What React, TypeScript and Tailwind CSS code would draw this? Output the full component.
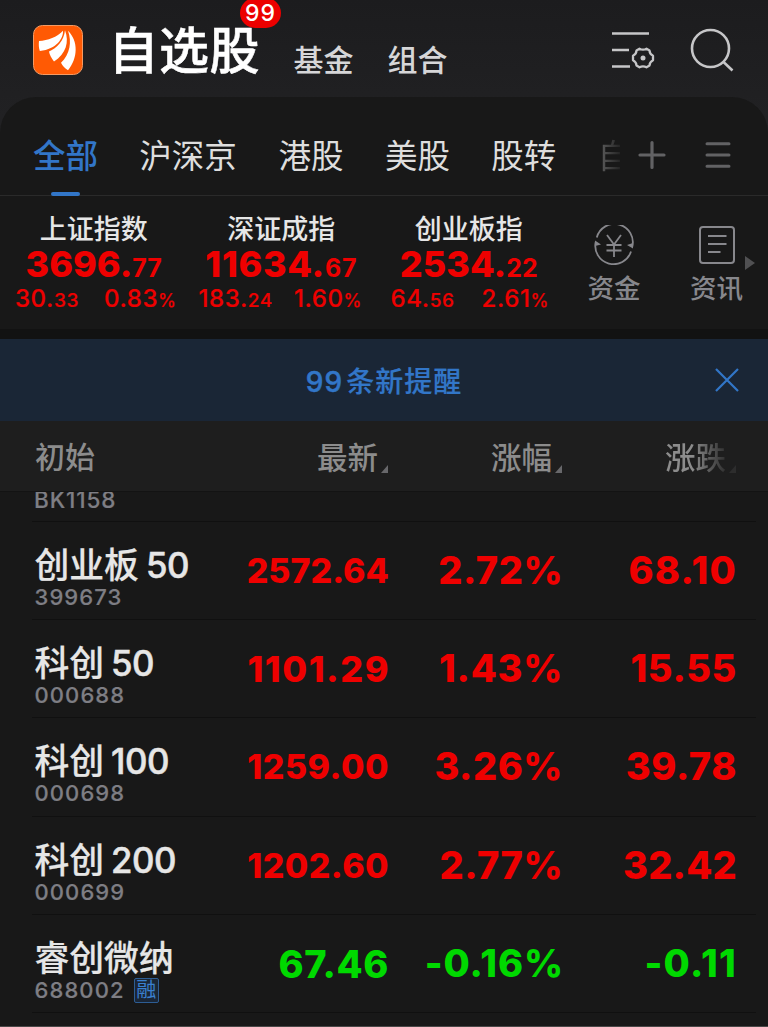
import React from "react";

type IndexQuote = {
  name: string;
  whole: string;
  decimal: string;
  change: [string, string];
  percent: string;
  wholeClass: string;
  detailClass: string;
};

type Stock = {
  name: string;
  suffix?: string;
  code: string;
  price: string;
  percent: string;
  change: string;
  down?: boolean;
  margin?: boolean;
  priceClass: string;
  percentClass: string;
  changeClass: string;
};

const indices: IndexQuote[] = [
  { name: "上证指数", whole: "3696.", decimal: "77", change: ["30.", "33"], percent: "0.83", wholeClass: "tracking-[0px]", detailClass: "gap-[25px] pl-[4px]" },
  { name: "深证成指", whole: "11634.", decimal: "67", change: ["183.", "24"], percent: "1.60", wholeClass: "tracking-[0.7px]", detailClass: "gap-[21px] -ml-[2px]" },
  { name: "创业板指", whole: "2534.", decimal: "22", change: ["64.", "56"], percent: "2.61", wholeClass: "tracking-[0px]", detailClass: "gap-[27px] pl-[2px]" },
];

const stocks: Stock[] = [
  { name: "创业板", suffix: "50", code: "399673", price: "2572.64", percent: "2.72%", change: "68.10", priceClass: "text-[34px] -mr-px", percentClass: "tracking-[0.5px] -mr-px", changeClass: "tracking-[1.200px] -mr-px" },
  { name: "科创", suffix: "50", code: "000688", price: "1101.29", percent: "1.43%", change: "15.55", priceClass: "text-[36px] tracking-[1.500px] -mr-[2px]", percentClass: "tracking-[0.700px] -mr-px", changeClass: "tracking-[0.600px] -mr-px" },
  { name: "科创", suffix: "100", code: "000698", price: "1259.00", percent: "3.26%", change: "39.78", priceClass: "text-[34px] tracking-[0.500px] -mr-px", percentClass: "tracking-[0.500px] -mr-px", changeClass: "tracking-[0.600px] -mr-px" },
  { name: "科创", suffix: "200", code: "000699", price: "1202.60", percent: "2.77%", change: "32.42", priceClass: "text-[34px] tracking-[0.400px] -mr-px", percentClass: "tracking-[0.500px] -mr-px", changeClass: "tracking-[0.200px] -mr-px" },
  { name: "睿创微纳", code: "688002", price: "67.46", percent: "-0.16%", change: "-0.11", down: true, margin: true, priceClass: "text-[38px] tracking-[0.600px] -mr-px", percentClass: "tracking-[0.900px] -mr-[2px]", changeClass: "tracking-[1.200px] -mr-px" },
];

function Logo() {
  return (
    <svg className="h-[50px] w-[50px] shrink-0" viewBox="0 0 50 50">
      <rect x="0.5" y="0.5" width="49" height="49" rx="9" fill="#ff5a04" stroke="#f59a62" />
      <path fill="#fff" d="M6 16 C15 15.5 24 12 30 5.700 C30.500 13 24 24 6.800 26 C5.700 23 5.600 19 6 16Z" />
      <path fill="#fff" d="M32 5.300 C36.500 17 33 29 21 36.500 C18.500 33.500 16.500 29.500 16 26.500 C24 23 31 16 32 5.300Z" />
      <path fill="#fff" d="M35 5.700 C45.500 16 45 33 35 45.300 C32 43.500 29.500 41 28 37.800 C37 29 39 17 35 5.700Z" />
    </svg>
  );
}

function FilterSettingsIcon() {
  return (
    <svg className="h-10 w-11 shrink-0" viewBox="0 0 44 40" fill="none" stroke="#c6c6c8" strokeWidth="2.7">
      <path d="M0 3.500H37M0 20H17M0 36.500H18" />
      <path
        strokeWidth="2.300"
        strokeLinejoin="round"
        d="M27.500 18.700 Q31 20.700 34.500 18.700 L37.500 20.500 Q37.600 24 41 25.800 V30.200 Q37.600 32 37.500 35.500 L34.500 37.300 Q31 35.300 27.500 37.300 L24.500 35.500 Q24.400 32 21 30.200 V25.800 Q24.400 24 24.500 20.500Z"
      />
      <circle cx="31" cy="28" r="2.500" fill="#c6c6c8" stroke="none" />
    </svg>
  );
}

function SearchIcon() {
  return (
    <svg className="h-11 w-11 shrink-0" viewBox="0 0 44 44" fill="none" stroke="#c6c6c8" strokeWidth="2.600">
      <circle cx="20.500" cy="20.500" r="18.500" />
      <path d="M33.500 34L42.500 42.500" />
    </svg>
  );
}

function FundsIcon() {
  return (
    <svg className="h-10 w-10" viewBox="0 0 40 40" fill="none" stroke="#87878c" strokeWidth="1.800">
      <path d="M2.800 12.500A18.300 18.300 0 0 1 38.200 22" />
      <path d="M37 26.500A18.300 18.300 0 0 1 1.700 17" />
      <path d="M39 18V23.500L33 20ZM1 21V15.500L7 19.500Z" fill="#87878c" stroke="none" />
      <path d="M13 10L20 19.500L27 10M20 19.500V32M12.500 20H27.500M12.500 25.500H27.500" />
    </svg>
  );
}

function NewsIcon() {
  return (
    <svg className="h-10 w-10" viewBox="0 0 40 40" fill="none" stroke="#87878c" strokeWidth="2">
      <rect x="3" y="2" width="34" height="36" rx="3" />
      <path d="M11 11H29.500M11 19H29.500M11 27H23.500" />
    </svg>
  );
}

function SortMark() {
  return (
    <svg className="ml-[3px] mt-[21px] h-2 w-2 shrink-0" viewBox="0 0 8 8">
      <path d="M7 0V8H0Z" fill="#68686b" />
    </svg>
  );
}

function Header() {
  return (
    <header className="flex h-[97px] items-start pl-[32.500px]">
      <div className="mt-[25px]">
        <Logo />
      </div>
      <div className="relative ml-[26px] mt-[21px] h-[60px] w-[153px] text-[50px] leading-[60px] font-medium tracking-[0.500px] text-white whitespace-nowrap [-webkit-text-stroke:0.500px_currentColor]">
        自选股
        <span className="absolute left-[131.500px] top-[-23px] flex h-[30px] w-[41px] items-center justify-center rounded-full bg-[#ec0000] text-[23px] leading-none font-medium tracking-[1px] [-webkit-text-stroke:0px]">
          99
        </span>
      </div>
      <nav className="ml-[32px] mt-10 flex gap-[34px] text-[30px] leading-10 font-medium text-[#d6d6d8] whitespace-nowrap">
        <span className="w-[60px]">基金</span>
        <span className="w-[60px]">组合</span>
      </nav>
      <div className="ml-auto mr-[34px] flex gap-[34px]">
        <div className="mt-[30px]">
          <FilterSettingsIcon />
        </div>
        <div className="mt-[28px]">
          <SearchIcon />
        </div>
      </div>
    </header>
  );
}

function Tabs() {
  return (
    <div className="flex h-[99px] items-stretch border-b border-[#2a2a2a] pl-[33px]">
      <div className="flex gap-[41.300px] text-[32.500px] leading-[119px] text-[#dedede] whitespace-nowrap">
        <div className="relative w-[65px] font-medium text-[#3276c8]">
          全部
          <span className="absolute bottom-[-1px] left-[18px] h-1 w-[29px] rounded-sm bg-[#3276c8]" />
        </div>
        <span className="w-[98px]">沪深京</span>
        <span className="w-[65px]">港股</span>
        <span className="w-[65px]">美股</span>
        <span className="w-[65px]">股转</span>
        <span className="w-[23px] overflow-hidden bg-linear-to-r from-[#666] to-[#242424] bg-clip-text text-transparent">自</span>
      </div>
      <svg className="ml-[17px] mt-[42px] h-[32px] w-[30px] shrink-0" viewBox="0 0 30 32" stroke="#626264" strokeWidth="3.200" strokeLinecap="round">
        <path d="M3 16H27M15 3.500V28.500" />
      </svg>
      <svg className="ml-[37px] mt-[42px] h-[32px] w-[28px] shrink-0" viewBox="0 0 28 32" stroke="#626264" strokeWidth="3" strokeLinecap="round">
        <path d="M3 4.700H25M3 16H25M3 27.300H25" />
      </svg>
    </div>
  );
}

function Indices() {
  return (
    <div className="flex h-[133px]">
      <div className="flex w-[563px]">
        {indices.map((q) => (
          <div key={q.name} className="flex w-[187.500px] shrink-0 flex-col items-center whitespace-nowrap">
            <div className="mt-[17px] text-[27px] leading-[34px] font-medium text-[#e6e6e6]">{q.name}</div>
            <div className={"h-[34px] text-[36px] leading-[34px] font-extrabold text-[#ee0000] " + q.wholeClass}>
              {q.whole}
              <span className="text-[25px] font-bold">{q.decimal}</span>
            </div>
            <div className={"flex h-9 text-[24px] leading-9 font-medium text-[#ee0000] [-webkit-text-stroke:0.200px_currentColor] " + q.detailClass}>
              <span className="tracking-[0.6px]">
                {q.change[0]}
                <span className="text-[19px]">{q.change[1]}</span>
              </span>
              <span className="tracking-[0.6px]">
                {q.percent}
                <span className="text-[18px]">%</span>
              </span>
            </div>
          </div>
        ))}
      </div>
      <div className="flex w-[102px] flex-col items-center pt-[29px] text-[26.500px] leading-[46px] font-medium text-[#87878c]">
        <FundsIcon />
        资金
      </div>
      <div className="flex w-[103px] flex-col items-center pt-[29px] text-[26.500px] leading-[46px] font-medium text-[#87878c]">
        <NewsIcon />
        资讯
      </div>
      <svg className="absolute left-[745px] top-[256px] h-[14px] w-[10px]" viewBox="0 0 10 14">
        <path d="M0 0L10 7L0 14Z" fill="#505052" />
      </svg>
    </div>
  );
}

function Notice() {
  return (
    <div className="relative flex h-[82px] items-center justify-center bg-[#1a2636] pt-[3px] text-[28px] font-medium text-[#3276c8] [-webkit-text-stroke:0.200px_currentColor]">
      <span className="mr-[3px] tracking-[1px] [-webkit-text-stroke:0.500px_currentColor]">99</span>
      <span className="tracking-[1px]">条新提醒</span>
      <svg className="absolute right-[29px] top-[29px] h-[24px] w-[24px]" viewBox="0 0 24 24" stroke="#3276c8" strokeWidth="2.200">
        <path d="M1 1L23 23M23 1L1 23" />
      </svg>
    </div>
  );
}

function ColumnHeads() {
  return (
    <div className="flex h-[71px] items-center border-b border-[#131313] bg-[#1e1e1e] pl-[35px] text-[30px] leading-[70px] font-medium text-[#8c8c8c] whitespace-nowrap">
      <span className="w-[180px] pt-px">初始</span>
      <div className="flex w-[174px] items-center justify-end pt-[4px] text-[30.500px]">
        最新
        <SortMark />
      </div>
      <div className="flex w-[174px] items-center justify-end pt-[4px] text-[30.500px]">
        涨幅
        <SortMark />
      </div>
      <div className="flex w-[174px] items-center justify-end pt-[4px] text-[30.500px]">
        <span className="bg-linear-to-r from-[#8c8c8c] from-45% to-[#303030] bg-clip-text text-transparent">涨跌</span>
        <span className="opacity-20">
          <SortMark />
        </span>
      </div>
    </div>
  );
}

function StockRow({ stock }: { stock: Stock }) {
  return (
    <div className={"ml-8 mr-3 flex h-[98.400px] shrink-0 border-b border-[#101010] pl-[2.500px] pr-5 font-extrabold whitespace-nowrap " + (stock.down ? "text-[#00d900]" : "text-[#ee0000]")}>
      <div className="w-[179.500px] pt-[23px]">
        <div className="flex h-[39px] gap-[7px] text-[34.800px] leading-[41px] font-medium text-[#e6e6e6] [-webkit-text-stroke:0.200px_currentColor]">
          <span>{stock.name}</span>
          {stock.suffix && <span className="tracking-[-0.500px] [-webkit-text-stroke:0.500px_currentColor]">{stock.suffix}</span>}
        </div>
        <div className="flex h-[26px] items-center text-[22px] leading-[26px] font-medium tracking-[1.100px] text-[#7e7e84] [-webkit-text-stroke:0.200px_currentColor]">
          {stock.code}
          {stock.margin && (
            <span className="ml-[9px] flex h-[25px] w-[25px] items-center justify-center rounded-[2px] border border-[#2d5d94] bg-[#1a2636] text-[20px] leading-none font-normal tracking-normal text-[#3a80d0] [-webkit-text-stroke:0px]">
              融
            </span>
          )}
        </div>
      </div>
      <div className="flex w-[174px] justify-end leading-[98px]">
        <span className={stock.priceClass}>{stock.price}</span>
      </div>
      <div className="flex w-[174px] justify-end text-[38px] leading-[97px]">
        <span className={stock.percentClass}>{stock.percent}</span>
      </div>
      <div className="flex w-[174px] justify-end text-[38px] leading-[97px]">
        <span className={stock.changeClass}>{stock.change}</span>
      </div>
    </div>
  );
}

export default function App() {
  return (
    <div className="relative flex h-[1027px] w-[768px] flex-col overflow-hidden bg-linear-to-b from-[#1c1c1e] to-[#222224] to-[140px] font-['Inter','Noto_Sans_CJK_SC',sans-serif]">
      <Header />
      <div className="rounded-t-[36px] bg-[#181818]">
        <Tabs />
        <Indices />
      </div>
      <div className="h-[10px] bg-[#121212]" />
      <Notice />
      <ColumnHeads />
      <div className="flex h-[535px] flex-col overflow-hidden border-b border-[#4a4848] bg-[#181818]">
        <div className="ml-8 mr-3 flex h-[29.500px] shrink-0 items-start border-b border-[#101010] pl-[2px] text-[22.500px] leading-[15px] font-medium tracking-[0.900px] text-[#7e7e84] [-webkit-text-stroke:0.200px_currentColor]">
          BK1158
        </div>
        {stocks.map((s) => (
          <StockRow key={s.code} stock={s} />
        ))}
      </div>
    </div>
  );
}
